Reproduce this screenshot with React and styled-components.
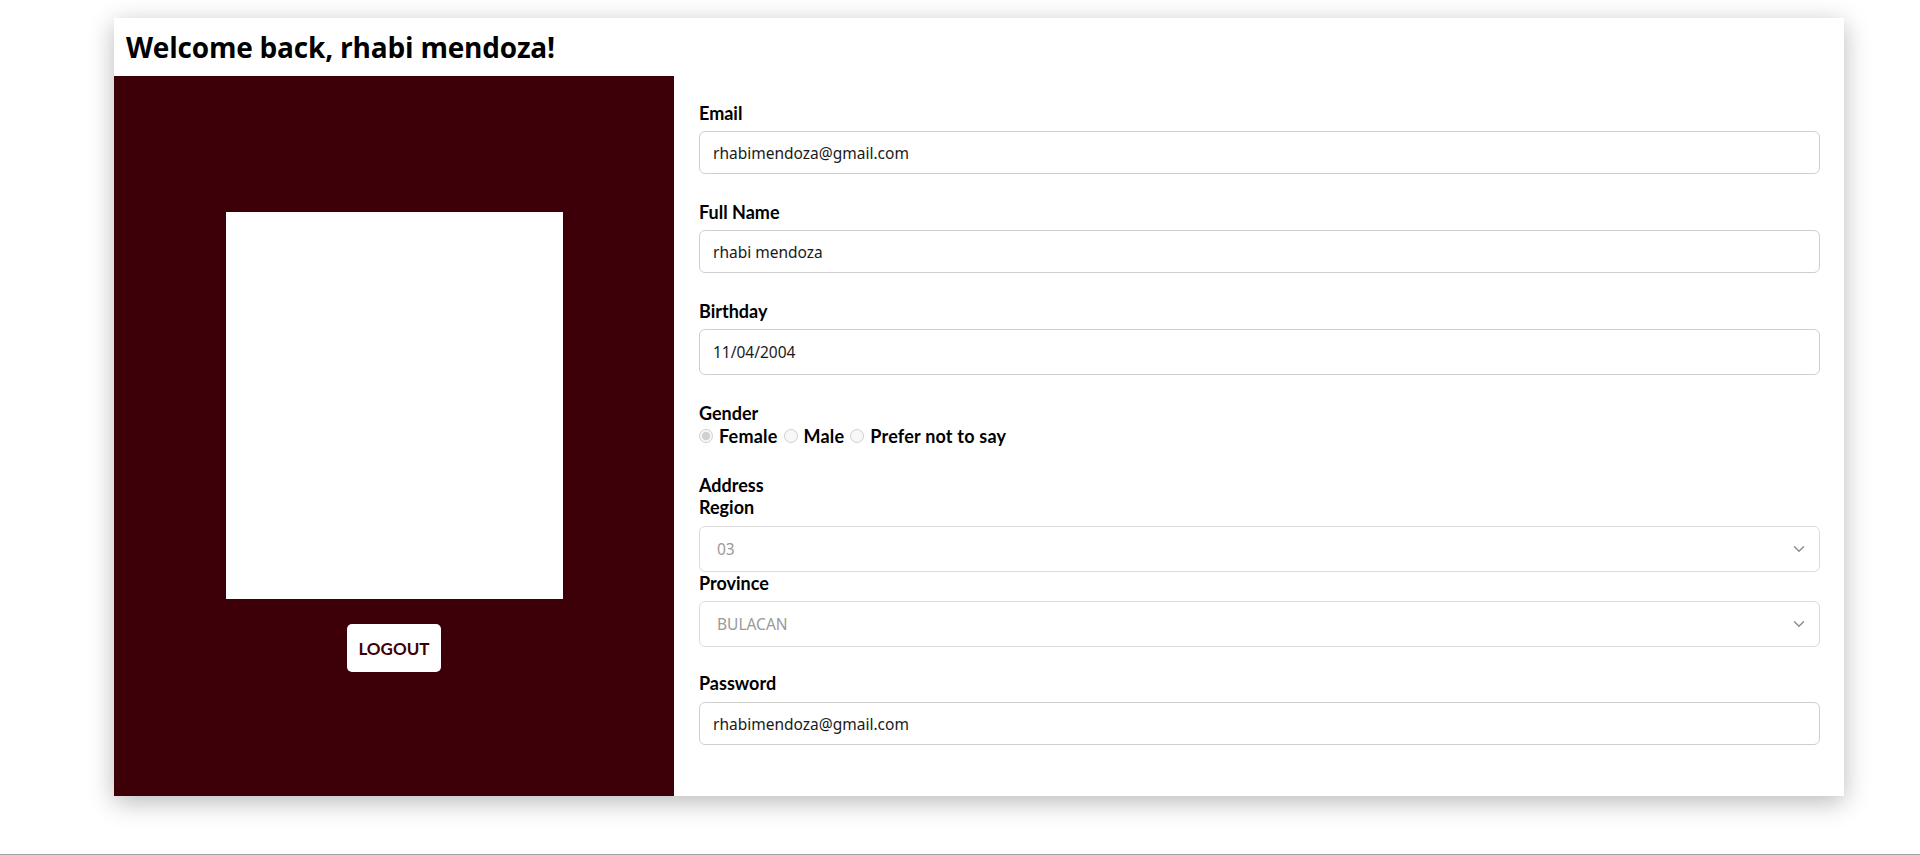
import React from "react";
import styled, { createGlobalStyle } from "styled-components";
import { ChevronDown } from "lucide-react";

const Global = createGlobalStyle`
  html, body { margin: 0; padding: 0; background: #fff; }
  body { font-family: "Open Sans", "Noto Sans", sans-serif; color: #000; }
  * { box-sizing: border-box; }
`;

const MAROON = "#3d0009";

const Page = styled.div`
  min-height: 855px;
  display: flex;
  flex-direction: column;
  padding-top: 18px;
`;

const Card = styled.div`
  width: 1730px;
  margin-left: 114px;
  background: #fff;
  box-shadow: 0 6px 24px rgba(0, 0, 0, 0.28);
`;

const Header = styled.header`
  height: 58px;
  display: flex;
  align-items: center;
  padding: 0 12px;
`;

const Title = styled.h1`
  margin: 0;
  font-family: "Open Sans", sans-serif;
  font-weight: 700;
  font-size: 28px;
  letter-spacing: -0.2px;
  color: #000;
`;

const Body = styled.div`
  display: grid;
  grid-template-columns: 560px 1fr;
  height: 720px;
`;

const Side = styled.aside`
  background: ${MAROON};
  display: flex;
  flex-direction: column;
  align-items: center;
  padding-top: 136px;
  gap: 25px;
`;

const Photo = styled.div`
  width: 337px;
  height: 387px;
  background: #fff;
`;

const LogoutButton = styled.button`
  width: 94px;
  height: 48px;
  border: none;
  border-radius: 5px;
  background: #fff;
  color: ${MAROON};
  font-family: "Lato", sans-serif;
  font-weight: 700;
  font-size: 17px;
  cursor: pointer;
`;

const Form = styled.form`
  padding: 26px 24px 0 25px;
  display: flex;
  flex-direction: column;
`;

const Field = styled.div`
  display: flex;
  flex-direction: column;
  margin-bottom: ${(p) => p.$mb ?? 27}px;
`;

const Label = styled.label`
  font-family: "Lato", sans-serif;
  font-weight: 700;
  font-size: 18px;
  line-height: 22px;
  color: #000;
  margin-bottom: ${(p) => p.$mb ?? 0}px;
`;

const Input = styled.input`
  height: ${(p) => p.$h ?? 43}px;
  width: 100%;
  border: 1px solid #cfcfcf;
  border-radius: 6px;
  padding: 0 13px;
  font-family: "Noto Sans", sans-serif;
  font-size: 15.5px;
  color: #1a1a1a;
  background: #fff;
  outline: none;
`;

const RadioRow = styled.div`
  display: flex;
  align-items: center;
  height: 23px;
`;

const Radio = styled.input.attrs({ type: "radio" })`
  width: 14px;
  height: 14px;
  margin: 0 0 0 ${(p) => (p.$first ? 0 : 6)}px;
  accent-color: #cfcfcf;
`;

const RadioText = styled.span`
  font-family: "Lato", sans-serif;
  font-weight: 700;
  font-size: 18px;
  letter-spacing: 0.2px;
  margin-left: 6px;
  color: #000;
`;

const SelectWrap = styled.div`
  position: relative;
  width: 100%;
`;

const Select = styled.select`
  appearance: none;
  width: 100%;
  height: 46px;
  border: 1px solid #dcdcdc;
  border-radius: 6px;
  background: #fff;
  padding: 0 17px;
  font-family: "Noto Sans", sans-serif;
  font-size: 15.5px;
  color: #9a9a9a;
  opacity: 1;
`;

const Chevron = styled(ChevronDown)`
  position: absolute;
  right: 12px;
  top: 50%;
  transform: translateY(-50%);
  color: #8a8a8a;
  pointer-events: none;
`;

const Footer = styled.div`
  margin-top: auto;
  height: 1px;
  background: #a3a3a3;
`;

export default function App() {
  return (
    <Page>
      <Global />
      <Card>
        <Header>
          <Title>Welcome back, rhabi mendoza!</Title>
        </Header>
        <Body>
          <Side>
            <Photo />
            <LogoutButton type="button">LOGOUT</LogoutButton>
          </Side>
          <Form onSubmit={(e) => e.preventDefault()}>
            <Field>
              <Label $mb={7}>Email</Label>
              <Input readOnly value="rhabimendoza@gmail.com" />
            </Field>
            <Field>
              <Label $mb={7}>Full Name</Label>
              <Input readOnly value="rhabi mendoza" />
            </Field>
            <Field>
              <Label $mb={7}>Birthday</Label>
              <Input readOnly $h={46} value="11/04/2004" />
            </Field>
            <Field>
              <Label>Gender</Label>
              <RadioRow>
                <Radio $first name="g" checked disabled readOnly />
                <RadioText>Female</RadioText>
                <Radio name="g" disabled />
                <RadioText>Male</RadioText>
                <Radio name="g" disabled />
                <RadioText>Prefer not to say</RadioText>
              </RadioRow>
            </Field>
            <Field $mb={25}>
              <Label>Address</Label>
              <Label $mb={8}>Region</Label>
              <SelectWrap>
                <Select disabled value="03" onChange={() => {}}>
                  <option value="03">03</option>
                </Select>
                <Chevron size={18} strokeWidth={1.8} />
              </SelectWrap>
              <Label $mb={7}>Province</Label>
              <SelectWrap>
                <Select disabled value="BULACAN" onChange={() => {}}>
                  <option value="BULACAN">BULACAN</option>
                </Select>
                <Chevron size={18} strokeWidth={1.8} />
              </SelectWrap>
            </Field>
            <Field $mb={0}>
              <Label $mb={8}>Password</Label>
              <Input readOnly value="rhabimendoza@gmail.com" />
            </Field>
          </Form>
        </Body>
      </Card>
      <Footer />
    </Page>
  );
}
